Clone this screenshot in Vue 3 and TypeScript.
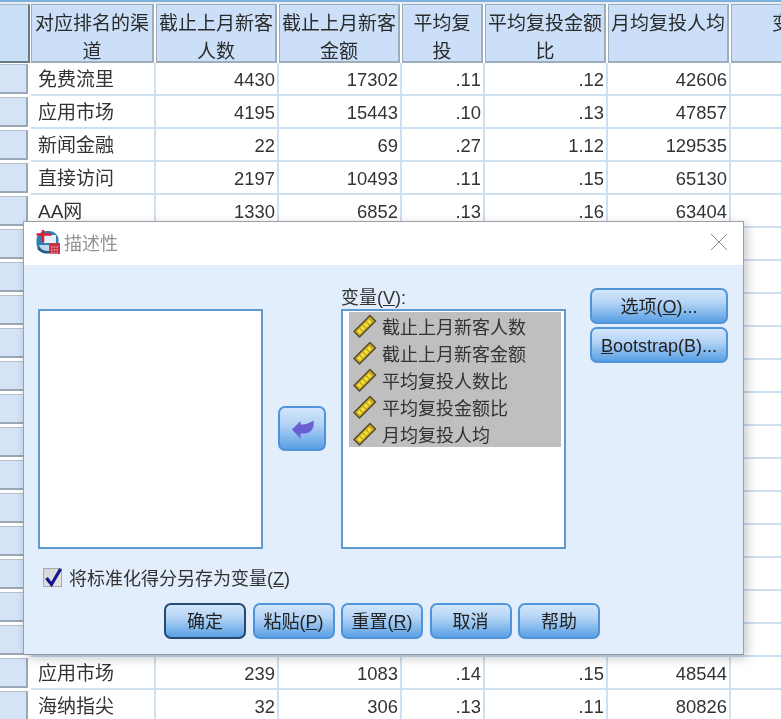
<script setup lang="ts">
interface Row { name: string; vals: string[] }
const headers = ['对应排名的渠道', '截止上月新客人数', '截止上月新客金额', '平均复投', '平均复投金额比', '月均复投人均', '变量']
const blank: Row = { name: '', vals: ['', '', '', '', ''] }
const rows: Row[] = [
  { name: '免费流里', vals: ['4430', '17302', '.11', '.12', '42606'] },
  { name: '应用市场', vals: ['4195', '15443', '.10', '.13', '47857'] },
  { name: '新闻金融', vals: ['22', '69', '.27', '1.12', '129535'] },
  { name: '直接访问', vals: ['2197', '10493', '.11', '.15', '65130'] },
  { name: 'AA网', vals: ['1330', '6852', '.13', '.16', '63404'] },
  ...Array.from({ length: 13 }, () => blank),
  { name: '应用市场', vals: ['239', '1083', '.14', '.15', '48544'] },
  { name: '海纳指尖', vals: ['32', '306', '.13', '.11', '80826'] },
]
const vars = ['截止上月新客人数', '截止上月新客金额', '平均复投人数比', '平均复投金额比', '月均复投人均']
</script>

<template>
  <div class="screen">
    <div class="topline"></div>
    <div class="grid">
      <div class="corner"></div>
      <div v-for="h in headers" :key="h" class="hcell"><span class="htext">{{ h }}</span></div>
      <template v-for="(r, i) in rows" :key="i">
        <div class="rowhead"></div>
        <div class="cell name">{{ r.name }}</div>
        <div v-for="(v, j) in r.vals" :key="j" class="cell num">{{ v }}</div>
        <div class="cell"></div>
      </template>
    </div>

    <div class="dialog">
      <div class="titlebar">
        <svg class="appicon" viewBox="0 0 24 24" width="24" height="24">
          <rect x="0.500" y="1" width="22" height="22" rx="9" fill="#2f7fb2" />
          <path d="M8 5h12v8H8z" fill="#e9f1f8" />
          <path d="M3 15h10v6H6z" fill="#bcd6ea" />
          <path d="M2 18c3 3 8 5 12 4" stroke="#1f5c8c" stroke-width="2.500" fill="none" />
          <path d="M7 0v12M0.500 4.500h15" stroke="#d4233a" stroke-width="2.600" fill="none" />
          <rect x="14" y="13" width="10" height="11" fill="#c8303f" />
          <path d="M15 17h8M15 20h8M15 23h8" stroke="#f4dadc" stroke-width="1.200" stroke-dasharray="1.500 1.200" />
        </svg>
        <span class="title">描述性</span>
        <svg class="close" viewBox="0 0 18 18" width="18" height="18">
          <path d="M1 1l16 16M17 1L1 17" stroke="#8d8d8d" stroke-width="1" fill="none" />
        </svg>
      </div>
      <div class="body">
        <div class="main">
          <div class="listbox source"></div>
          <button class="btn arrow" aria-label="移回">
            <svg viewBox="0 0 22 19" width="22" height="19">
              <path d="M0 9.500L8.500 1V4.500C13 5 17 3.500 21.500 0.500C22.500 7 20 12.500 13.500 13.500H8.500V18.500Z" fill="#6a5fd2" />
            </svg>
          </button>
          <div class="target">
            <div class="label">变量(<u>V</u>):</div>
            <div class="listbox varlist">
              <div class="selection">
                <div v-for="v in vars" :key="v" class="item">
                  <svg class="ruler" viewBox="0 0 24 24" width="24" height="24">
                    <path d="M1 17.500L17 1.500l5.500 5.500L6.500 23z" fill="#c9a820" stroke="#544d2e" stroke-width="1.500" stroke-linejoin="round" />
                    <path d="M5.500 18.500L18 6" stroke="#f6e23c" stroke-width="4" stroke-dasharray="3 1.600" />
                  </svg>
                  <span>{{ v }}</span>
                </div>
              </div>
            </div>
          </div>
          <div class="side">
            <button class="btn sidebtn">选项(<u>O</u>)...</button>
            <button class="btn sidebtn"><u>B</u>ootstrap(B)...</button>
          </div>
        </div>
        <div class="check">
          <span class="box">
            <svg class="tick" viewBox="0 0 19 19" width="19" height="19">
              <path d="M3.500 10l5 6.500L17.500 1" stroke="#16168f" stroke-width="3.200" fill="none" />
            </svg>
          </span>
          <span>将标准化得分另存为变量(<u>Z</u>)</span>
        </div>
        <div class="actions">
          <button class="btn act default">确定</button>
          <button class="btn act">粘贴(<u>P</u>)</button>
          <button class="btn act">重置(<u>R</u>)</button>
          <button class="btn act">取消</button>
          <button class="btn act">帮助</button>
        </div>
      </div>
    </div>
  </div>
</template>

<style>
html, body { margin: 0; background: #fff; }
</style>

<style scoped>
.screen {
  position: relative;
  width: 781px;
  height: 719px;
  overflow: hidden;
  background: #fff;
  color: #333;
  font-family: "Liberation Sans", "Noto Sans CJK SC", sans-serif;
  font-kerning: none;
  filter: blur(0.35px);
}
.topline {
  height: 4px;
  box-sizing: border-box;
  background: #e6edf4;
  box-shadow: inset 0 2px 0 #7fb0dc;
}
.grid {
  display: grid;
  width: 854px;
  grid-template-columns: 31px 125px 123px 123px 83px 123px 123px 123px;
  grid-auto-rows: 33px;
  grid-template-rows: 59px;
}
.corner {
  margin-right: 1px;
  box-sizing: border-box;
  height: 59px;
  background: #c9dff6;
  border: 1px solid #a9b7c6;
  border-right: 2px solid #6b7886;
  border-bottom: 2px solid #6b7886;
  border-left: 0;
}
.hcell {
  box-sizing: border-box;
  height: 59px;
  margin-right: 2px;
  padding: 5px 2px 0;
  background: #cbe0f8;
  border: 1px solid #9fadbb;
  border-width: 1px 2px 2px 1px;
  text-align: center;
  font-size: 19px;
  line-height: 28px;
  color: #2b2b2b;
  overflow: hidden;
}
.htext { display: block; }
.rowhead {
  box-sizing: border-box;
  height: 30px;
  margin: 1px 3px 2px 0;
  background: #d4e4f6;
  border: 1px solid #b5c1cd;
  border-left: 0;
  border-right: 2px solid #9aa7b4;
  border-bottom: 2px solid #9aa7b4;
}
.cell {
  box-sizing: border-box;
  height: 33px;
  border-right: 2px solid #cedff0;
  border-bottom: 2px solid #cedff0;
  font-size: 18.400px;
  line-height: 33px;
  white-space: nowrap;
  overflow: hidden;
}
.name { padding-left: 7px; font-size: 19px; }
.num { text-align: right; padding-right: 2px; }

.dialog {
  position: absolute;
  left: 23px;
  top: 221px;
  width: 721px;
  height: 434px;
  box-sizing: border-box;
  display: flex;
  flex-direction: column;
  background: #e2eefb;
  border: 1px solid #9aa0a6;
  border-bottom-color: #8e949a;
  box-shadow: 3px 3px 10px rgba(0, 0, 0, 0.22);
}
.titlebar {
  height: 43px;
  box-sizing: border-box;
  flex: none;
  display: flex;
  align-items: center;
  padding: 0 15px 3px 12px;
  background: #fff;
}
.appicon { flex: none; }
.title {
  margin-left: 4px;
  font-size: 18px;
  color: #929292;
}
.close { margin-left: auto; }
.body {
  flex: 1;
  padding: 23px 0 0 14px;
}
.main {
  display: flex;
  align-items: flex-start;
}
.listbox {
  box-sizing: border-box;
  width: 225px;
  height: 240px;
  background: #fff;
  border: 2px solid #5f9bd0;
}
.source { margin-top: 21px; }
.btn {
  box-sizing: border-box;
  padding: 2px 0 0;
  border: 2px solid #4f94d8;
  border-radius: 7px;
  background: linear-gradient(#d3e6fa 0%, #b3d3f5 40%, #6fade9 85%, #5b9fe5 100%);
  color: #222;
  font-family: inherit;
  font-size: 18px;
  line-height: 1;
  white-space: nowrap;
}
.arrow {
  width: 48px;
  height: 45px;
  margin: 118px 15px 0;
  padding: 2px 0 0 2px;
  display: flex;
  align-items: center;
  justify-content: center;
}
.target { width: 225px; }
.label {
  height: 21px;
  font-size: 18px;
  line-height: 21px;
  white-space: nowrap;
}
.varlist { padding: 1px 3px 0 6px; }
.selection { background: #bfbfbf; }
.item {
  height: 27px;
  display: flex;
  align-items: center;
  font-size: 18px;
  white-space: nowrap;
}
.ruler { margin: 0 5px 0 4px; flex: none; }
.side {
  margin-left: 24px;
  display: flex;
  flex-direction: column;
  gap: 3px;
}
.sidebtn { width: 138px; height: 36px; }
.check {
  margin: 18px 0 0 5px;
  height: 20px;
  display: flex;
  align-items: center;
  gap: 7px;
  font-size: 18px;
  white-space: nowrap;
}
.box {
  box-sizing: border-box;
  width: 19px;
  height: 19px;
  display: flex;
  align-items: center;
  justify-content: center;
  background: linear-gradient(135deg, #d2d4dc, #e6e6e2);
  border: 1px solid #a9aba8;
}
.tick { flex: none; overflow: visible; }
.actions {
  margin: 16px 0 0 126px;
  display: flex;
  gap: 6.500px;
}
.act { width: 82px; height: 36px; }
.default {
  border-color: #26496f;
}
</style>
